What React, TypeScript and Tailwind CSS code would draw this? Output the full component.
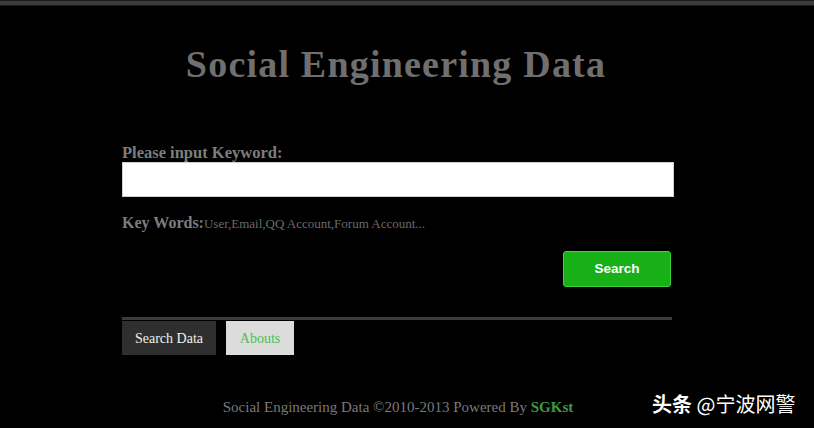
import React from "react";

export default function App() {
  const serif = { fontFamily: '"Liberation Serif", "DejaVu Serif", serif' };
  return (
    <div className="w-[814px] h-[428px] bg-black overflow-hidden flex flex-col relative" style={serif}>
      <div className="h-[1px] bg-[#1a1a1e]" />
      <div className="h-[4px] bg-[#3b3b40]" />
      <div className="h-[1px] bg-[#1a1a1e]" />
      <div className="flex flex-col items-center pr-[22px]">
        <h1 className="mt-[38px] text-[38px] leading-[40px] font-bold text-[#6f6f6f] tracking-[1.2px]">
          Social Engineering Data
        </h1>
      </div>
      <div className="w-[552px] ml-[122px] flex flex-col">
        <div className="mt-[60px] text-[16.5px] leading-[18px] font-bold text-[#7d7d7d]">Please input Keyword:</div>
        <div className="h-[35px] bg-white border border-[#cfcfcf]" />
        <div className="mt-[14px] flex items-baseline text-[#7d7d7d]">
          <span className="text-[16px] font-bold">Key Words:</span>
          <span className="text-[13px] text-[#6a6a6a]">User,Email,QQ Account,Forum Account...</span>
        </div>
        <div className="mt-[16px] flex justify-end pr-[3px]">
          <button
            className="w-[108px] h-[36px] rounded-[3px] bg-[#17b017] border border-[#3ad43a] text-white text-[13.5px] font-bold"
            style={{ fontFamily: '"Liberation Sans", Arial, sans-serif' }}
          >
            Search
          </button>
        </div>
        <div className="mt-[30px] h-[3px] bg-[#3c3c3c] w-[550px]" />
        <div className="mt-[1px] flex gap-[10px]">
          <div className="w-[94px] h-[34px] bg-[#2f2f2f] text-[#f0f0f0] text-[14px] flex items-center justify-center">
            Search Data
          </div>
          <div className="w-[68px] h-[34px] bg-[#dcdcdc] text-[#4cbf4c] text-[14px] flex items-center justify-center">
            Abouts
          </div>
        </div>
      </div>
      <div className="mt-[41px] text-center text-[15px] text-[#7a7a7a] pr-[18px]">
        Social Engineering Data ©2010-2013 Powered By <span className="text-[#3f9a3f] font-bold">SGKst</span>
      </div>
      <div
        className="absolute left-[652px] top-[391px] text-white text-[20px] leading-[26px]"
        style={{ fontFamily: '"Noto Sans CJK SC", "Noto Sans", sans-serif' }}
      >
        <span className="font-bold">头条</span> @宁波网警
      </div>
    </div>
  );
}
